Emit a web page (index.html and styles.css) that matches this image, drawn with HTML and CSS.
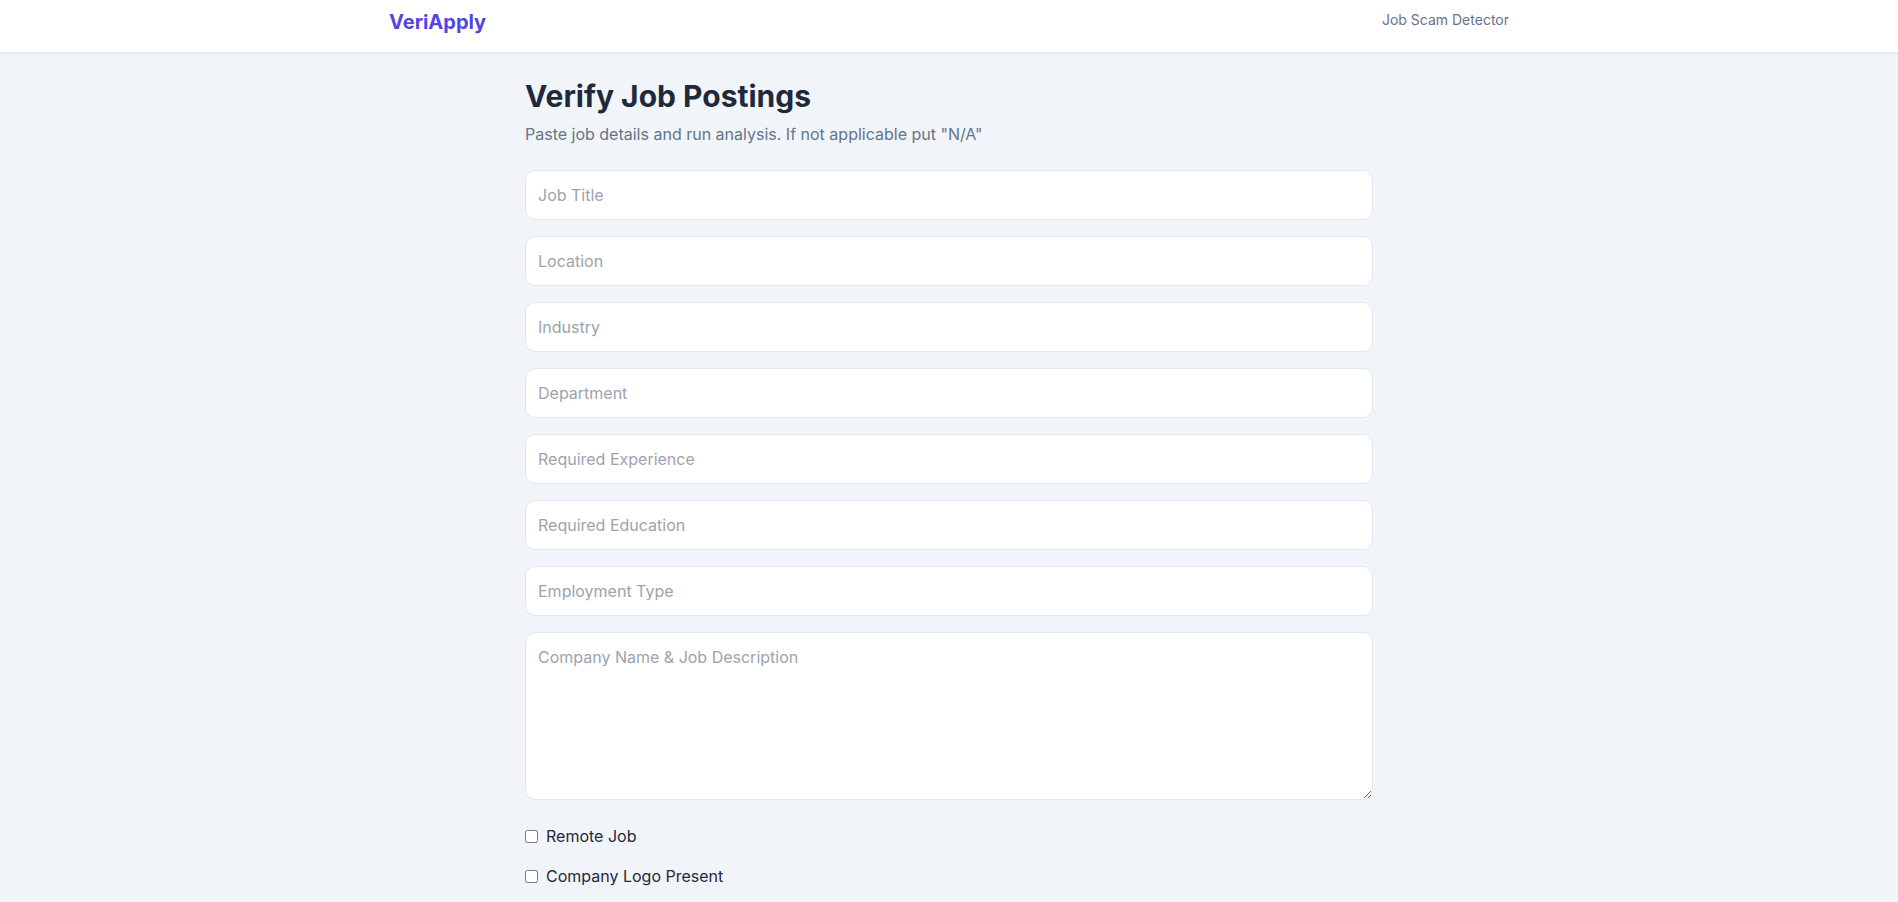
FILE: index.html
```html
<!DOCTYPE html>
<html lang="en">
<head>
<meta charset="utf-8">
<title>VeriApply</title>
<link rel="stylesheet" href="styles.css">
</head>
<body>
<header class="site-header">
  <div class="header-inner">
    <a class="logo" href="#">VeriApply</a>
    <nav class="nav"><a href="#">Job Scam Detector</a></nav>
  </div>
</header>
<main class="main">
  <h1 class="title">Verify Job Postings</h1>
  <p class="subtitle">Paste job details and run analysis. If not applicable put "N/A"</p>
  <form class="form">
    <input class="field" type="text" placeholder="Job Title">
    <input class="field" type="text" placeholder="Location">
    <input class="field" type="text" placeholder="Industry">
    <input class="field" type="text" placeholder="Department">
    <input class="field" type="text" placeholder="Required Experience">
    <input class="field" type="text" placeholder="Required Education">
    <input class="field" type="text" placeholder="Employment Type">
    <textarea class="field area" placeholder="Company Name &amp; Job Description"></textarea>
    <div class="checks">
      <label class="check"><input type="checkbox"> Remote Job</label>
      <label class="check"><input type="checkbox"> Company Logo Present</label>
    </div>
  </form>
</main>
</body>
</html>
```
FILE: styles.css
```css
* { box-sizing: border-box; }
html, body { margin: 0; padding: 0; }
body {
  background: #f1f5f9;
  font-family: Inter, "Noto Sans", "Liberation Sans", sans-serif;
  color: #1e293b;
}
a { text-decoration: none; }
.site-header {
  background: #ffffff;
  border-bottom: 1px solid #e2e8f0;
  box-shadow: 0 1px 2px rgba(15, 23, 42, 0.05);
  height: 53px;
}
.header-inner {
  max-width: 1152px;
  margin: 0 auto;
  padding: 8px 16px 0;
  display: flex;
  justify-content: space-between;
  align-items: flex-start;
}
.logo {
  font-size: 20px;
  line-height: 28px;
  font-weight: 700;
  color: #4f46e5;
}
.nav { padding-top: 1px; }
.nav a {
  font-size: 14px;
  line-height: 20px;
  color: #64748b;
}
.main {
  max-width: 896px;
  margin: 0 auto;
  padding: 25px 24px 40px;
}
.title {
  margin: 0;
  font-size: 30px;
  line-height: 36px;
  font-weight: 700;
  color: #1e293b;
}
.subtitle {
  margin: 8px 0 24px;
  font-size: 16px;
  line-height: 24px;
  color: #64748b;
}
.form {
  display: flex;
  flex-direction: column;
  gap: 16px;
}
.field {
  display: block;
  width: 100%;
  margin: 0;
  padding: 12px;
  border: 1px solid #e2e8f0;
  border-radius: 10px;
  background: #ffffff;
  font-family: inherit;
  font-size: 16px;
  line-height: 24px;
  color: #1e293b;
  outline: none;
}
.field::placeholder { color: #9ca3af; }
.area {
  height: 168px;
  resize: vertical;
}
.checks {
  display: flex;
  flex-direction: column;
  gap: 16px;
  margin-top: 8px;
}
.check {
  display: flex;
  align-items: center;
  gap: 8px;
  font-size: 16px;
  line-height: 24px;
  color: #1e293b;
}
.check input {
  margin: 0;
  width: 13px;
  height: 13px;
}
```
